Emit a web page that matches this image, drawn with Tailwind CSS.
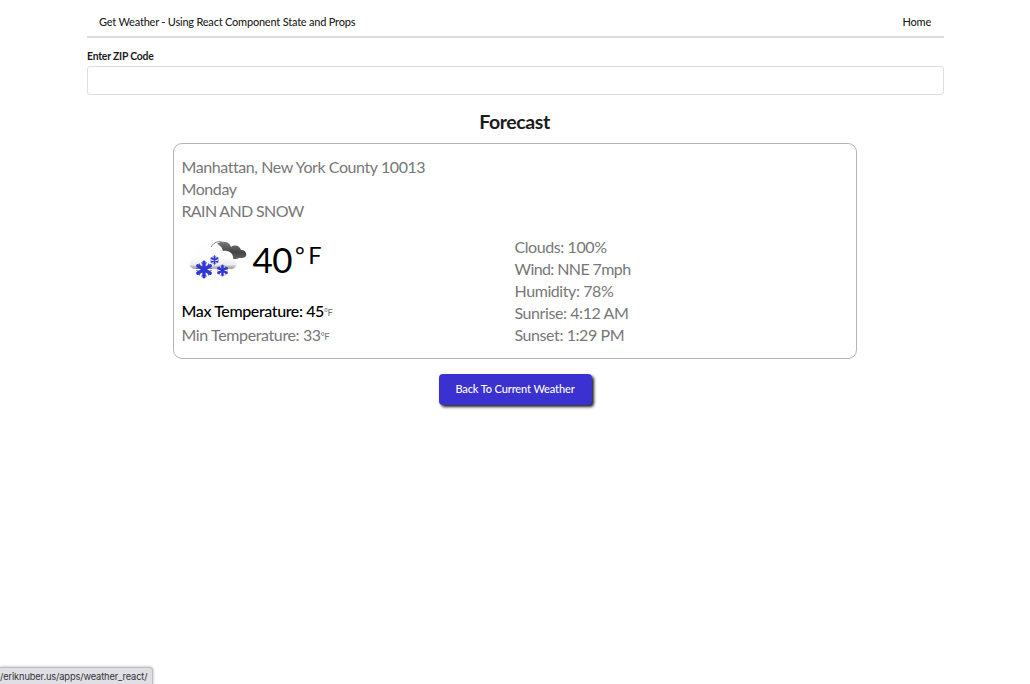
<!DOCTYPE html>
<html lang="en">
<head>
<meta charset="utf-8">
<title>Get Weather</title>
<script src="https://cdn.jsdelivr.net/npm/@tailwindcss/browser@4"></script>
</head>
<body class="h-screen overflow-hidden bg-white font-['Lato',sans-serif] text-[#1b1c1d] flex flex-col">
<div class="ml-[87px] w-[857px] flex flex-col">
  <nav class="h-[38px] border-b-2 border-[#dcdddd] flex items-center justify-between pl-3 pr-[13px] pt-[7px] text-[11px] leading-4 font-medium tracking-[-0.22px] text-black/90">
    <span>Get Weather - Using React Component State and Props</span>
    <span>Home</span>
  </nav>
  <label for="zip" class="mt-[10px] h-4 text-[10.4px] leading-4 font-bold tracking-[-0.2px]">Enter ZIP Code</label>
  <input id="zip" class="mt-[2px] h-[29px] rounded-[3px] border border-[#dedede] px-3 text-xs outline-none">
  <h1 class="mt-[14px] pr-[2px] text-center text-[19.5px] leading-[26px] font-bold tracking-[-0.4px]">Forecast</h1>
  <section class="mt-[8px] mx-[86px] w-[684px] h-[216px] rounded-[9px] border border-[#b4b4b4] text-[16px] leading-[22px] tracking-[-0.42px] text-[#777] flex flex-col pl-[7.5px] pt-[12px]">
    <div>
      <p>Manhattan, New York County 10013</p>
      <p>Monday</p>
      <p class="tracking-[-0.65px]">RAIN AND SNOW</p>
    </div>
    <div class="flex">
      <div class="w-[333px] flex flex-col">
        <div class="flex h-[77px] pl-[3px] pt-[10px]">
          <svg class="w-[66px] h-[46px] mt-[4px] shrink-0" viewBox="0 0 66 46">
            <defs>
              <linearGradient id="cloud" x2="0" y2="1"><stop offset=".55" stop-color="#fefefe"/><stop offset=".83" stop-color="#eee"/><stop offset="1" stop-color="#999"/></linearGradient>
              <linearGradient id="dark" x2="0" y2="1"><stop stop-color="#777"/><stop offset=".6" stop-color="#454545"/><stop offset="1" stop-color="#606060"/></linearGradient>
              <g id="flake" stroke="#2f38d0" fill="none" stroke-linecap="round"><path d="M0-6.5V6.5M-5.6-3.3 5.6 3.3M-5.6 3.3 5.6-3.3" stroke-width="3"/><path d="M-2.4-6 0-4 2.4-6M-2.4 6 0 4 2.4 6M-6.5-1-3.5-2-4-5M6.5 1 3.5 2 4 5M-6.5 1-3.5 2-4 5M6.5-1 3.5-2 4-5" stroke-width=".8"/></g>
            </defs>
            <path d="M29 15C29 9 34 5 39 6c4 0 6 2 7 5 4-3 9-1 10 3 4 0 6 3 5 6-1 2-4 2-7 2-3 2-7 1-9-1-4 1-8 0-9-3-3 0-5-1-7-3Z" fill="url(#dark)"/>
            <path d="M9 33C4 32 3 24 9 22 8 13 15 8 21 11 25 5 36 6 38 15c6-1 11 3 10 8 5 2 5 9-1 10Z" fill="url(#cloud)"/>
            <path d="M26 11C29 6 34 4 39 7" stroke="#888" fill="none"/>
            <path d="M5 30q22 5 44 0" stroke="#bbb" fill="none"/>
            <use href="#flake" transform="translate(19 33.5) scale(1.12)"/>
            <use href="#flake" transform="translate(29.5 24) scale(.58)"/>
            <use href="#flake" transform="translate(37.5 34.5) scale(.76)"/>
          </svg>
          <div class="flex pl-[2px] text-black"><span class="text-[35px] leading-[54px] tracking-[-0.5px]">40</span><span class="text-[23.5px] leading-[46px] tracking-[3.5px] pl-[3px]">°F</span></div>
        </div>
        <p class="h-6 leading-6 text-black font-medium tracking-[-0.4px]">Max Temperature: 45<span class="text-[9.5px] leading-none align-[1px] font-normal text-[#777]">°F</span></p>
        <p class="h-6 leading-6 tracking-[-0.38px]">Min Temperature: 33<span class="text-[9.5px] leading-none align-[1px]">°F</span></p>
      </div>
      <div class="pt-[14px]">
        <p>Clouds: 100%</p>
        <p class="tracking-[-0.6px]">Wind: NNE 7mph</p>
        <p>Humidity: 78%</p>
        <p>Sunrise: 4:12 AM</p>
        <p>Sunset: 1:29 PM</p>
      </div>
    </div>
  </section>
  <button class="mt-[15px] ml-[352px] w-[153px] h-[31px] pb-[2px] pr-[1px] rounded-[4px] bg-[#3a31d0] shadow-[2px_2px_3px_#222] text-[11px] leading-4 font-medium tracking-[-0.12px] text-white">Back To Current Weather</button>
</div>
<div class="mt-auto w-[153px] h-[17px] rounded-tr-[4px] border-t border-r border-[#bcbcc2] bg-[#dfdfe5] shadow-[0_0_3px_#aaa] font-['Inter',sans-serif] text-[9.3px] leading-[17px] tracking-[-0.14px] text-[#333] whitespace-nowrap">/eriknuber.us/apps/weather_react/</div>
</body>
</html>
